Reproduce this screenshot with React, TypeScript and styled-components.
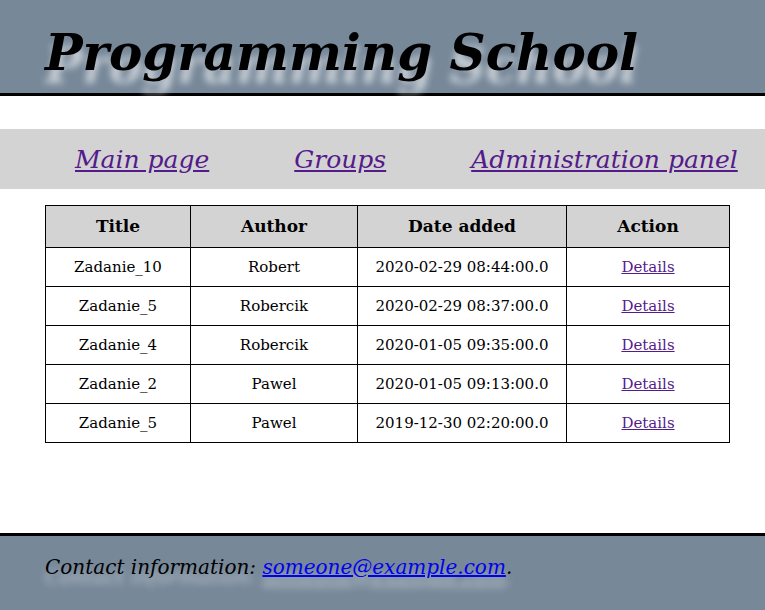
import React from 'react';
import styled, { createGlobalStyle } from 'styled-components';

const GlobalStyle = createGlobalStyle`
  html, body {
    margin: 0;
    padding: 0;
    background: #fff;
    font-family: "DejaVu Serif", serif;
  }
`;

const Page = styled.div`
  display: flex;
  flex-direction: column;
  min-height: 610px;
`;

const Header = styled.header`
  background: lightslategray;
  border-bottom: 3px solid #000;
  height: 93px;
  padding-left: 45px;
  display: flex;
  align-items: flex-start;
`;

const Title = styled.h1`
  margin: 22px 0 0;
  font-size: 50px;
  font-style: italic;
  font-weight: bold;
  line-height: 62px;
  color: #000;
  text-shadow: 0 13px 7px rgba(255, 255, 255, 0.6);
`;

const Nav = styled.nav`
  margin-top: 33px;
  background: lightgray;
  height: 60px;
  display: flex;
  align-items: center;
`;

const NavList = styled.ul`
  display: flex;
  gap: 85px;
  margin: 1px 0 0;
  padding: 0 0 0 75px;
  list-style: none;
`;

const NavLink = styled.a`
  font-size: 25px;
  font-style: italic;
  color: #551a8b;
`;

const Main = styled.main`
  flex: 1;
  padding: 16px 35px 0 45px;
`;

const Table = styled.table`
  width: 684px;
  table-layout: fixed;
  border-collapse: collapse;
  text-align: center;
  font-size: 15px;
`;

const Th = styled.th`
  background: lightgray;
  border: 1px solid #000;
  padding: 10px;
  font-size: 17px;
  line-height: 21px;
`;

const Td = styled.td`
  border: 1px solid #000;
  padding: 10px;
  line-height: 18px;
`;

const Details = styled.a`
  color: #551a8b;
`;

const Footer = styled.footer`
  background: lightslategray;
  border-top: 3px solid #000;
  height: 74px;
  padding-left: 45px;
  display: flex;
  align-items: flex-start;
`;

const Contact = styled.p`
  margin: 19px 0 0;
  font-size: 20px;
  font-style: italic;
  line-height: 24px;
  text-shadow: 0 10px 7px rgba(255, 255, 255, 0.5);

  a {
    color: #0000ee;
  }
`;

const columns = [
  { title: 'Title', width: 145 },
  { title: 'Author', width: 167 },
  { title: 'Date added', width: 209 },
  { title: 'Action', width: 163 },
];

const rows = [
  ['Zadanie_10', 'Robert', '2020-02-29 08:44:00.0'],
  ['Zadanie_5', 'Robercik', '2020-02-29 08:37:00.0'],
  ['Zadanie_4', 'Robercik', '2020-01-05 09:35:00.0'],
  ['Zadanie_2', 'Pawel', '2020-01-05 09:13:00.0'],
  ['Zadanie_5', 'Pawel', '2019-12-30 02:20:00.0'],
];

const App = () => (
  <>
    <GlobalStyle />
    <Page>
      <Header>
        <Title>Programming School</Title>
      </Header>
      <Nav>
        <NavList>
          <li><NavLink href="#">Main page</NavLink></li>
          <li><NavLink href="#">Groups</NavLink></li>
          <li><NavLink href="#">Administration panel</NavLink></li>
        </NavList>
      </Nav>
      <Main>
        <Table>
          <colgroup>
            {columns.map((c) => (
              <col key={c.title} style={{ width: c.width }} />
            ))}
          </colgroup>
          <thead>
            <tr>
              {columns.map((c) => (
                <Th key={c.title}>{c.title}</Th>
              ))}
            </tr>
          </thead>
          <tbody>
            {rows.map(([title, author, date], i) => (
              <tr key={i}>
                <Td>{title}</Td>
                <Td>{author}</Td>
                <Td>{date}</Td>
                <Td><Details href="#">Details</Details></Td>
              </tr>
            ))}
          </tbody>
        </Table>
      </Main>
      <Footer>
        <Contact>
          Contact information: <a href="#">someone@example.com</a>.
        </Contact>
      </Footer>
    </Page>
  </>
);

export default App;
